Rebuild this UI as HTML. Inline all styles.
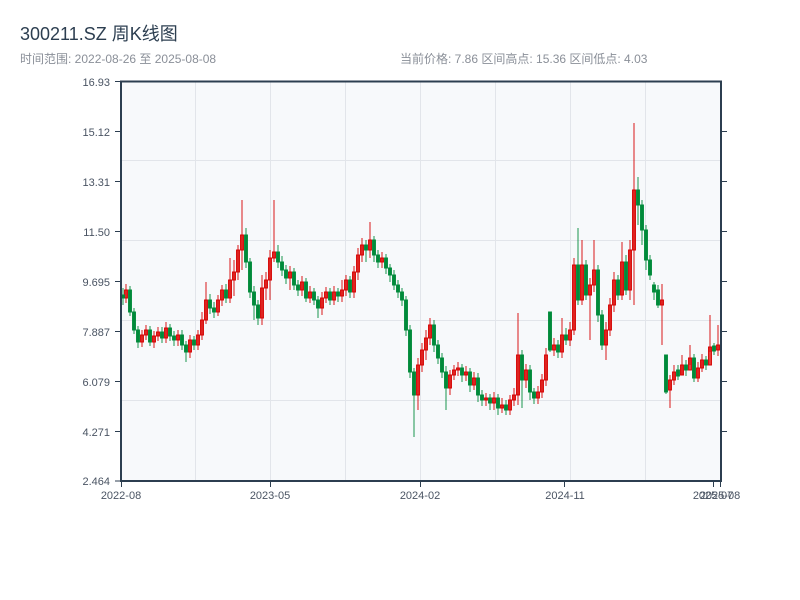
<!DOCTYPE html>
<html><head><meta charset="utf-8"><style>
body{margin:0;background:#fff;width:800px;height:600px;overflow:hidden;font-family:"Liberation Sans","Noto Sans CJK SC",sans-serif}
svg{position:absolute;left:0;top:0}
</style></head><body>
<svg width="800" height="600" xmlns="http://www.w3.org/2000/svg" font-family="Liberation Sans, Noto Sans CJK SC, sans-serif">
<text x="20" y="40" font-size="18" fill="#2c3e50">300211.SZ 周K线图</text>
<text x="20" y="63" font-size="12" fill="#8a8f98">时间范围: 2022-08-26 至 2025-08-08</text>
<text x="400" y="63" font-size="12" fill="#8a8f98">当前价格: 7.86   区间高点: 15.36   区间低点: 4.03</text>
<rect x="121" y="81" width="600" height="400" fill="#f7f9fb"/>
<g stroke="#e2e5ea" stroke-width="1">
<line x1="195.5" y1="81" x2="195.5" y2="481"/><line x1="270.5" y1="81" x2="270.5" y2="481"/>
<line x1="345.5" y1="81" x2="345.5" y2="481"/><line x1="420.5" y1="81" x2="420.5" y2="481"/>
<line x1="495.5" y1="81" x2="495.5" y2="481"/><line x1="570.5" y1="81" x2="570.5" y2="481"/>
<line x1="645.5" y1="81" x2="645.5" y2="481"/>
<line x1="121" y1="160.5" x2="721" y2="160.5"/><line x1="121" y1="240.5" x2="721" y2="240.5"/>
<line x1="121" y1="320.5" x2="721" y2="320.5"/><line x1="121" y1="400.5" x2="721" y2="400.5"/>
</g>
<path fill="#e8403a" stroke="#d40000" stroke-width="0.9" d="M126 284V303M124.5 290h3V298h-3zM142 330V347M140.5 335h3V342h-3zM146 325V340M144.5 330h3V335h-3zM154 331V348M152.5 336h3V342h-3zM158 327V341M156.5 332h3V336h-3zM166 322V343M164.5 328h3V338h-3zM178 330V346M176.5 335h3V340h-3zM190 335V358M188.5 340h3V352h-3zM198 330V350M196.5 335h3V345h-3zM202 312V340M200.5 320h3V335h-3zM206 282V324M204.5 300h3V320h-3zM218 295V316M216.5 300h3V312h-3zM222 285V306M220.5 290h3V300h-3zM230 258V303M228.5 280h3V298h-3zM234 260V296M232.5 272h3V280h-3zM238 245V280M236.5 250h3V272h-3zM242 200V270M240.5 235h3V250h-3zM262 275V325M260.5 288h3V318h-3zM266 272V300M264.5 280h3V288h-3zM270 250V300M268.5 258h3V280h-3zM274 200V262M272.5 252h3V258h-3zM290 266V290M288.5 272h3V278h-3zM302 276V296M300.5 282h3V290h-3zM310 286V303M308.5 292h3V298h-3zM322 292V315M320.5 298h3V308h-3zM326 287V303M324.5 292h3V298h-3zM334 286V305M332.5 292h3V300h-3zM342 280V302M340.5 290h3V296h-3zM346 275V296M344.5 280h3V290h-3zM354 266V298M352.5 272h3V292h-3zM358 248V280M356.5 255h3V272h-3zM362 238V262M360.5 245h3V255h-3zM370 222V258M368.5 240h3V250h-3zM382 252V268M380.5 258h3V262h-3zM418 358V410M416.5 365h3V395h-3zM422 343V372M420.5 350h3V365h-3zM426 330V360M424.5 338h3V350h-3zM430 318V345M428.5 325h3V338h-3zM450 370V395M448.5 375h3V388h-3zM454 365V380M452.5 370h3V375h-3zM458 362V376M456.5 368h3V370h-3zM466 366V381M464.5 372h3V375h-3zM474 372V390M472.5 378h3V385h-3zM486 393V406M484.5 398h3V400h-3zM494 392V410M492.5 398h3V403h-3zM502 398V413M500.5 405h3V408h-3zM510 395V415M508.5 400h3V410h-3zM514 388V406M512.5 395h3V400h-3zM518 313V405M516.5 355h3V395h-3zM526 364V388M524.5 370h3V380h-3zM538 386V404M536.5 392h3V398h-3zM542 374V398M540.5 380h3V392h-3zM546 348V386M544.5 355h3V380h-3zM554 338V356M552.5 345h3V350h-3zM562 318V358M560.5 335h3V352h-3zM570 322V346M568.5 330h3V340h-3zM574 258V335M572.5 265h3V330h-3zM582 240V305M580.5 265h3V300h-3zM590 278V340M588.5 285h3V295h-3zM594 240V292M592.5 270h3V285h-3zM606 322V360M604.5 330h3V345h-3zM610 298V336M608.5 305h3V330h-3zM614 272V312M612.5 280h3V305h-3zM622 242V300M620.5 262h3V295h-3zM630 240V300M628.5 250h3V290h-3zM634 123V305M632.5 190h3V250h-3zM662 284V345M660.5 300h3V305h-3zM670 375V408M668.5 380h3V390h-3zM674 365V385M672.5 372h3V380h-3zM682 355V375M680.5 365h3V375h-3zM690 345V365M688.5 358h3V370h-3zM698 362V382M696.5 368h3V378h-3zM702 354V372M700.5 360h3V368h-3zM710 315V352M708.5 347h3V365h-3zM718 325V356M716.5 345h3V350h-3z"/>
<path fill="#008a3a" stroke="#008a3a" stroke-width="0.9" d="M123 288V305M121.5 295h3V298h-3zM130 286V316M128.5 290h3V312h-3zM134 308V334M132.5 312h3V330h-3zM138 326V348M136.5 330h3V342h-3zM150 326V346M148.5 330h3V342h-3zM162 327V343M160.5 332h3V338h-3zM170 324V341M168.5 328h3V336h-3zM174 331V346M172.5 336h3V340h-3zM182 330V350M180.5 335h3V345h-3zM186 341V362M184.5 345h3V352h-3zM194 336V350M192.5 340h3V345h-3zM210 294V314M208.5 300h3V308h-3zM214 302V318M212.5 308h3V312h-3zM226 284V303M224.5 290h3V298h-3zM246 228V268M244.5 235h3V262h-3zM250 258V298M248.5 262h3V292h-3zM254 286V320M252.5 292h3V305h-3zM258 300V325M256.5 305h3V318h-3zM278 245V268M276.5 252h3V262h-3zM282 256V276M280.5 262h3V270h-3zM286 265V284M284.5 270h3V278h-3zM294 268V290M292.5 272h3V285h-3zM298 280V296M296.5 285h3V290h-3zM306 278V302M304.5 282h3V298h-3zM314 288V305M312.5 292h3V300h-3zM318 296V318M316.5 300h3V308h-3zM330 288V305M328.5 292h3V300h-3zM338 288V302M336.5 292h3V296h-3zM350 276V298M348.5 280h3V292h-3zM366 240V262M364.5 245h3V250h-3zM374 236V262M372.5 240h3V255h-3zM378 250V268M376.5 255h3V262h-3zM386 254V274M384.5 258h3V268h-3zM390 264V282M388.5 268h3V275h-3zM394 270V290M392.5 275h3V285h-3zM398 280V298M396.5 285h3V292h-3zM402 288V306M400.5 292h3V300h-3zM406 296V336M404.5 300h3V330h-3zM410 325V378M408.5 330h3V372h-3zM414 368V437M412.5 372h3V395h-3zM434 320V352M432.5 325h3V345h-3zM438 340V364M436.5 345h3V358h-3zM442 353V378M440.5 358h3V372h-3zM446 366V410M444.5 372h3V388h-3zM462 364V382M460.5 368h3V375h-3zM470 368V392M468.5 372h3V385h-3zM478 373V402M476.5 378h3V395h-3zM482 390V406M480.5 395h3V400h-3zM490 394V410M488.5 398h3V403h-3zM498 394V415M496.5 398h3V408h-3zM506 400V415M504.5 405h3V410h-3zM522 350V408M520.5 355h3V380h-3zM530 365V400M528.5 370h3V392h-3zM534 388V404M532.5 392h3V398h-3zM550 312V352M548.5 312h3V350h-3zM558 340V358M556.5 345h3V352h-3zM566 328V345M564.5 335h3V340h-3zM578 228V305M576.5 265h3V300h-3zM586 260V300M584.5 265h3V295h-3zM598 265V322M596.5 270h3V315h-3zM602 310V350M600.5 315h3V345h-3zM618 275V300M616.5 280h3V295h-3zM626 255V295M624.5 262h3V290h-3zM638 177V225M636.5 190h3V205h-3zM642 200V245M640.5 205h3V230h-3zM646 225V270M644.5 230h3V260h-3zM650 255V280M648.5 260h3V275h-3zM654 282V300M652.5 285h3V292h-3zM658 285V308M656.5 290h3V305h-3zM666 355V394M664.5 355h3V392h-3zM678 365V380M676.5 370h3V376h-3zM686 360V376M684.5 365h3V370h-3zM694 354V382M692.5 358h3V378h-3zM706 356V370M704.5 360h3V365h-3zM714 343V355M712.5 346h3V351h-3z"/>
<g stroke="#2c3e50" stroke-width="2" fill="none">
<line x1="121" y1="81" x2="121" y2="482"/><line x1="721" y1="81" x2="721" y2="482"/>
<line x1="120" y1="481" x2="722" y2="481"/><line x1="120" y1="81.5" x2="722" y2="81.5"/>
</g>
<g stroke="#2c3e50" stroke-width="1">
<line x1="115" y1="81.5" x2="121" y2="81.5"/><line x1="115" y1="131.5" x2="121" y2="131.5"/><line x1="115" y1="181.5" x2="121" y2="181.5"/><line x1="115" y1="231.5" x2="121" y2="231.5"/><line x1="115" y1="281.5" x2="121" y2="281.5"/><line x1="115" y1="331.5" x2="121" y2="331.5"/><line x1="115" y1="381.5" x2="121" y2="381.5"/><line x1="115" y1="431.5" x2="121" y2="431.5"/><line x1="115" y1="481" x2="121" y2="481"/>
<line x1="721" y1="131.5" x2="727" y2="131.5"/><line x1="721" y1="181.5" x2="727" y2="181.5"/><line x1="721" y1="231.5" x2="727" y2="231.5"/><line x1="721" y1="281.5" x2="727" y2="281.5"/><line x1="721" y1="331.5" x2="727" y2="331.5"/><line x1="721" y1="381.5" x2="727" y2="381.5"/><line x1="721" y1="431.5" x2="727" y2="431.5"/>
<line x1="121.5" y1="481" x2="121.5" y2="487"/><line x1="270.5" y1="481" x2="270.5" y2="487"/><line x1="420.5" y1="481" x2="420.5" y2="487"/><line x1="564.5" y1="481" x2="564.5" y2="487"/><line x1="713.5" y1="481" x2="713.5" y2="487"/><line x1="720.5" y1="481" x2="720.5" y2="487"/>
</g>
<g font-size="11" fill="#4a5463" text-anchor="end">
<text x="110" y="86">16.93</text><text x="110" y="136">15.12</text><text x="110" y="186">13.31</text><text x="110" y="236">11.50</text><text x="110" y="286">9.695</text><text x="110" y="336">7.887</text><text x="110" y="386">6.079</text><text x="110" y="436">4.271</text><text x="110" y="485">2.464</text>
</g>
<g font-size="11" fill="#4a5463" text-anchor="middle">
<text x="121" y="499">2022-08</text><text x="270" y="499">2023-05</text><text x="420" y="499">2024-02</text><text x="565" y="499">2024-11</text><text x="713" y="499">2025-07</text><text x="720" y="499">2025-08</text>
</g>
</svg>
</body></html>
